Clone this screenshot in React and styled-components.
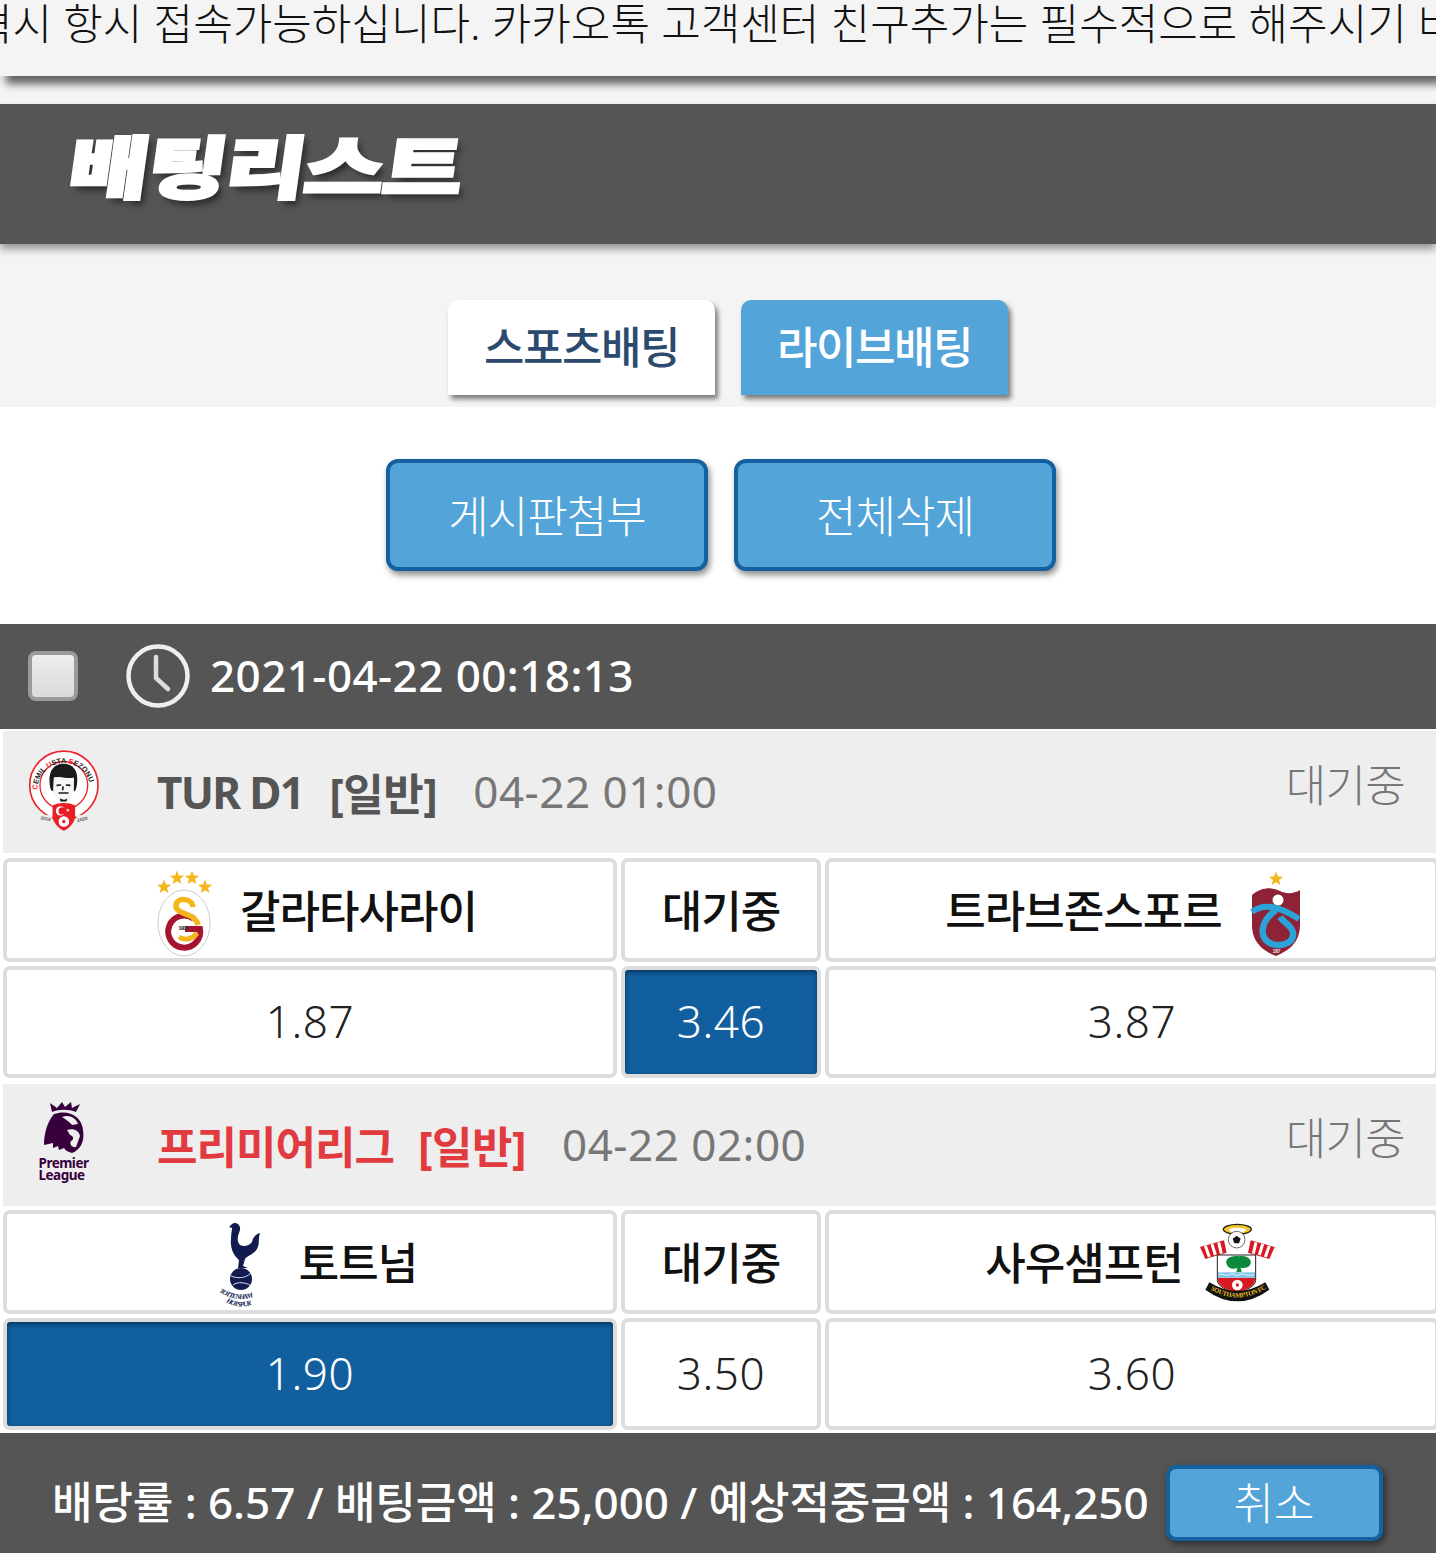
import React from 'react';
import styled, { createGlobalStyle } from 'styled-components';

const GlobalStyle = createGlobalStyle`
  html, body { margin: 0; padding: 0; background: #fff; }
  body { font-family: "Noto Sans", "Noto Sans CJK KR", sans-serif; width: 1436px; overflow-x: hidden; }
  * { box-sizing: border-box; }
`;

const Page = styled.div`
  width: 1436px;
  height: 1553px;
  overflow: hidden;
  background: #fff;
`;
const TopArea = styled.div`
  background: #f4f4f4;
  height: 407px;
  display: flex;
  flex-direction: column;
`;
const Notice = styled.div`
  height: 76px;
  font-size: 43px;
  font-weight: 300;
  line-height: 48px;
  color: #111;
  white-space: nowrap;
  overflow: hidden;
  box-shadow: 6px 8px 8px rgba(0, 0, 0, 0.6);
  position: relative;
  background: #f4f4f4;
`;
const NoticeText = styled.div`
  margin-left: -27px;
`;
const TitleBar = styled.div`
  margin-top: 28px;
  height: 140px;
  background: #555;
  box-shadow: 0 5px 8px rgba(0, 0, 0, 0.4);
  padding-left: 70px;
  display: flex;
  align-items: center;
`;
const Title = styled.h1`
  margin: 0 0 20px;
  font-family: "Noto Sans CJK KR", sans-serif;
  font-size: 68px;
  font-weight: 900;
  letter-spacing: -1px;
  line-height: 1;
  color: #fff;
  -webkit-text-stroke: 3px #fff;
  transform-origin: left center;
  transform: skewX(-8deg) scaleX(1.275);
  text-shadow: 4px 5px 7px rgba(0, 0, 0, 0.55);
`;
const Tabs = styled.div`
  margin-top: 56px;
  padding-left: 20px;
  display: flex;
  justify-content: center;
  gap: 26px;
`;
const Tab = styled.div`
  width: 267px;
  height: 95px;
  padding-bottom: 6px;
  border-radius: 10px 10px 0 0;
  display: flex;
  align-items: center;
  justify-content: center;
  font-size: 44px;
  font-weight: 500;
  letter-spacing: -1.5px;
  background: ${({ $active }) => ($active ? '#53a4d8' : '#fff')};
  color: ${({ $active }) => ($active ? '#fff' : '#2c4a6e')};
  box-shadow: 3px 4px 5px rgba(0, 0, 0, 0.5);
`;
const Actions = styled.div`
  padding: 52px 0 0 6px;
  height: 217px;
  display: flex;
  justify-content: center;
  gap: 26px;
`;
const ActionButton = styled.div`
  width: 322px;
  height: 112px;
  padding-bottom: 2px;
  border: 4px solid #1460a0;
  border-radius: 12px;
  background: #53a4d8;
  color: #fff;
  font-size: 44px;
  font-weight: 300;
  letter-spacing: -1px;
  display: flex;
  align-items: center;
  justify-content: center;
  box-shadow: 2px 4px 6px rgba(0, 0, 0, 0.45);
`;
const SlipHeader = styled.div`
  height: 105px;
  padding: 0 0 2px 28px;
  background: #555;
  display: flex;
  align-items: center;
  color: #fff;
  font-size: 44px;
  font-weight: 500;
`;
const Check = styled.div`
  width: 50px;
  height: 50px;
  border: 4px solid #9a9a9a;
  border-radius: 8px;
  background: linear-gradient(#eee, #dadada);
  margin-right: 47px;
`;
const ClockIcon = styled.svg`
  width: 66px;
  height: 66px;
  margin-right: 19px;
`;
const SlipTime = styled.div`
  margin-bottom: 2px;
  letter-spacing: 0.42px;
`;
const LeagueRow = styled.div`
  margin: ${({ $first }) => ($first ? '2px' : '6px')} 0 0 3px;
  height: 122px;
  background: #eee;
  display: flex;
  align-items: center;
  padding-left: 25px;
  font-size: 44px;
`;
const LeagueLogo = styled.div`
  width: 73px;
  height: 85px;
  margin: 0 56px 3px 0;
  display: flex;
  align-items: center;
  justify-content: center;
`;
const LeagueName = styled.div`
  font-weight: 700;
  color: ${({ $red }) => ($red ? '#e23b3f' : '#555')};
  letter-spacing: ${({ $spacing }) => $spacing}px;
  margin-right: ${({ $gap }) => $gap}px;
`;
const LeagueTag = styled.div`
  font-weight: 700;
  color: ${({ $red }) => ($red ? '#e23b3f' : '#555')};
  letter-spacing: -0.5px;
  margin-right: 36px;
`;
const KickOff = styled.div`
  color: #777;
  font-weight: 400;
  letter-spacing: 0.5px;
  margin-bottom: 2px;
`;
const Status = styled.div`
  margin-left: auto;
  margin-right: 31px;
  margin-bottom: 18px;
  color: #777;
  font-weight: 300;
  letter-spacing: -0.7px;
`;
const MatchGrid = styled.div`
  display: grid;
  grid-template-columns: 614px 200px 614px;
  column-gap: 4px;
  padding-left: 3px;
  margin-top: ${({ $top }) => $top}px;
`;
const Cell = styled.div`
  height: ${({ $tall }) => ($tall ? 112 : 104)}px;
  padding-bottom: 2px;
  border: 4px solid #ddd;
  border-radius: 7px;
  background: ${({ $picked }) => ($picked ? '#125f9f' : '#fff')};
  color: ${({ $picked }) => ($picked ? '#fff' : '#222')};
  box-shadow: ${({ $picked }) => ($picked ? 'inset 0 2px 5px rgba(0, 0, 0, 0.45)' : 'none')};
  display: flex;
  align-items: center;
  justify-content: center;
  font-size: 44px;
  font-weight: 300;
  letter-spacing: 0.6px;
`;
const TeamCell = styled(Cell)`
  font-weight: 500;
  color: #111;
  letter-spacing: -1px;
  gap: ${({ $gap }) => $gap}px;
  padding-right: ${({ $shiftRight }) => $shiftRight || 0}px;
  padding-left: ${({ $shiftLeft }) => $shiftLeft || 0}px;
`;
const TeamLogo = styled.div`
  display: flex;
  margin-top: 10px;
`;
const Footer = styled.div`
  margin-top: 3px;
  height: 120px;
  background: #555;
  display: flex;
  align-items: center;
  padding: 20px 0 0 52px;
  color: #fff;
  font-size: 44px;
  font-weight: 500;
`;
const FooterText = styled.div`
  white-space: nowrap;
  margin-bottom: 6px;
  letter-spacing: -0.05px;
`;
const CancelButton = styled.div`
  width: 217px;
  height: 76px;
  margin-left: 17px;
  padding-bottom: 4px;
  border: 4px solid #1460a0;
  border-radius: 10px;
  background: #53a4d8;
  font-weight: 300;
  display: flex;
  align-items: center;
  justify-content: center;
  box-shadow: 2px 3px 7px rgba(0, 0, 0, 0.5);
`;

const star = (cx, cy, r) => {
  const pts = [];
  for (let i = 0; i < 10; i++) {
    const a = (Math.PI / 5) * i - Math.PI / 2;
    const rad = i % 2 ? r * 0.42 : r;
    pts.push(`${(cx + rad * Math.cos(a)).toFixed(2)},${(cy + rad * Math.sin(a)).toFixed(2)}`);
  }
  return pts.join(' ');
};

const CemilLogo = () => (
  <svg width="73" height="85" viewBox="80 385 220 255">
    <defs>
      <path id="cemilArc" d="M108 510 A80 80 0 1 1 268 510" />
    </defs>
    <circle cx="188" cy="497" r="103" fill="#fff" stroke="#e8242c" strokeWidth="5" />
    <circle cx="188" cy="497" r="72" fill="#fff" stroke="#e8242c" strokeWidth="4" />
    <text fontSize="22" fontWeight="700" fontFamily="Liberation Sans, sans-serif" fill="#222">
      <textPath href="#cemilArc">
        <tspan fill="#e8242c">C</tspan>EMIL <tspan fill="#e8242c">U</tspan>STA <tspan fill="#e8242c">S</tspan>EZONU
      </textPath>
    </text>
    <path d="M145 490 C142 450 160 432 186 432 C216 432 232 452 228 490 C226 508 222 518 218 514 L218 474 C200 478 170 470 158 474 L156 514 C150 516 146 505 145 490 Z" fill="#1a1a1a" />
    <path d="M158 474 C170 470 200 478 218 474 L216 520 C212 540 198 550 186 550 C172 550 160 538 157 520 Z" fill="#f6f6f6" />
    <path d="M166 497 L180 496 M194 496 L208 497 M172 520 L202 520 M186 500 L184 512" stroke="#1a1a1a" strokeWidth="5" fill="none" />
    <path d="M176 536 C184 542 192 542 198 536 L196 546 L178 546 Z" fill="#1a1a1a" />
    <path d="M154 558 C172 548 204 548 222 558 L222 595 C216 615 200 628 188 634 C176 628 160 615 154 595 Z" fill="#ea1c24" />
    <circle cx="178" cy="574" r="14" fill="#fff" />
    <circle cx="183" cy="574" r="11" fill="#ea1c24" />
    <polygon points={star(200, 572, 6)} fill="#fff" />
    <circle cx="188" cy="606" r="16" fill="#fff" />
    <circle cx="188" cy="606" r="5" fill="#ea1c24" />
    <rect x="112" y="586" width="40" height="16" fill="#eee" />
    <rect x="226" y="586" width="40" height="16" fill="#eee" />
    <text x="118" y="602" fontSize="14" fontWeight="700" fontFamily="Liberation Sans, sans-serif" fill="#555" transform="rotate(12 132 596)">2019</text>
    <text x="228" y="604" fontSize="14" fontWeight="700" fontFamily="Liberation Sans, sans-serif" fill="#555" transform="rotate(-12 244 598)">2020</text>
  </svg>
);

const PremierLogo = () => (
  <svg width="54" height="84" viewBox="0 0 54 84">
    <path d="M14 10 L12 1 L19 6 L24 0 L27 5 L33 0 L34 6 L42 2 L38 10 C31 7 21 7 14 10 Z" fill="#37003c" />
    <path d="M16 12 C30 7 44 14 45 28 C47 40 42 48 34 51 C30 50 27 48 26 46 L21 48 L20 44 L15 46 L15 41 L6 43 C6 32 9 20 16 12 Z" fill="#37003c" />
    <path d="M24 15 C31 12 38 16 40 22 L34 23 C32 20 28 18 24 15 Z M29 28 C35 26 41 28 42 34 L38 45 C34 46 31 42 33 39 C36 38 36 34 32 33 Z" fill="#eee" />
    <text x="0.5" y="66" fontSize="13.5" fontWeight="700" letterSpacing="-0.5" fontFamily="Noto Sans, sans-serif" fill="#37003c">Premier</text>
    <text x="0.5" y="78" fontSize="13.5" fontWeight="700" letterSpacing="-0.5" fontFamily="Noto Sans, sans-serif" fill="#37003c">League</text>
  </svg>
);

const GalatasarayLogo = () => (
  <svg width="56" height="86" viewBox="0 0 56 86">
    <ellipse cx="27" cy="52" rx="26" ry="33" fill="#fff" stroke="#ccc" strokeWidth="1" />
    <polygon points={star(7, 16, 7.5)} fill="#f5b61c" />
    <polygon points={star(20, 7, 7.5)} fill="#f5b61c" />
    <polygon points={star(35, 7, 7.5)} fill="#f5b61c" />
    <polygon points={star(48, 16, 7.5)} fill="#f5b61c" />
    <path d="M37 48 A16 16 0 1 0 43 58 L28 58" fill="none" stroke="#a5152f" strokeWidth="6" />
    <path d="M36 36 C35 27 20 26 19 34 C18 40 26 42 31 44 C36 46 40 49 41 54" fill="none" stroke="#f5b61c" strokeWidth="5.5" />
    <path d="M22 66 C28 70 36 68 40 62" fill="none" stroke="#f5b61c" strokeWidth="5" />
    <text x="26" y="59" textAnchor="middle" fontSize="6" fontWeight="700" fontFamily="Liberation Sans, sans-serif" fill="#333">1905</text>
  </svg>
);

const TrabzonLogo = () => (
  <svg width="52" height="86" viewBox="0 0 52 86">
    <polygon points={star(26, 8, 7.5)} fill="#f5b61c" />
    <path d="M2 24 C12 16 22 16 30 20 C36 23 44 23 50 19 L50 54 C50 72 38 80 26 85 C14 80 2 72 2 54 Z" fill="#8e2237" />
    <circle cx="28" cy="29" r="5.5" fill="#fff" />
    <path d="M2 41 C12 33 28 34 49 48" fill="none" stroke="#2aa4d8" strokeWidth="6" />
    <path d="M26 39 C10 50 8 68 22 73 C32 76 44 72 43 62 C42 54 34 52 30 46" fill="none" stroke="#2aa4d8" strokeWidth="6.5" />
    <text x="26" y="82" textAnchor="middle" fontSize="5" fontFamily="Liberation Sans, sans-serif" fill="#eee">1967</text>
  </svg>
);

const TottenhamLogo = () => (
  <svg width="46" height="88" viewBox="0 0 46 88">
    <defs>
      <path id="spursTop" d="M1 70 Q23 84 45 70" />
      <path id="spursBottom" d="M8 80 Q23 89 39 80" />
    </defs>
    <path d="M14 6 L11 5 L14 2 C18 -1 23 3 22 8 C20 14 18 18 22 23 C26 25 31 24 34 20 C35 15 38 12 42 11 C40 16 42 22 39 27 C35 33 29 34 27 37 L25 44 L30 46 L20 46 L21 38 C15 33 12 25 13 17 C13 12 14 9 14 6 Z" fill="#111b50" />
    <circle cx="23" cy="57" r="11" fill="#111b50" />
    <path d="M13 54 C20 57 28 56 33 51 M15 63 C20 59 28 61 32 63" fill="none" stroke="#d6dbee" strokeWidth="1" />
    <text fontSize="7" fontWeight="700" fontFamily="Liberation Serif, serif" fontStyle="italic" fill="#111b50">
      <textPath href="#spursTop">TOTTENHAM</textPath>
    </text>
    <text fontSize="7" fontWeight="700" fontFamily="Liberation Serif, serif" fontStyle="italic" fill="#111b50">
      <textPath href="#spursBottom">HOTSPUR</textPath>
    </text>
  </svg>
);

const SouthamptonLogo = () => (
  <svg width="76" height="90" viewBox="25 20 228 270">
    <defs>
      <path id="saintsArc" d="M56 224 Q140 274 224 224" />
    </defs>
    <ellipse cx="140" cy="45" rx="42" ry="15" fill="#f3c526" stroke="#222" strokeWidth="4" />
    <ellipse cx="140" cy="47" rx="26" ry="7" fill="#fff" />
    <path d="M28 98 L100 78 L108 115 L44 134 Z" fill="#d71920" />
    <path d="M44 94 L56 128 M64 89 L74 122 M84 84 L92 118" stroke="#fff" strokeWidth="9" />
    <path d="M252 98 L180 78 L172 115 L236 134 Z" fill="#d71920" />
    <path d="M236 94 L224 128 M216 89 L206 122 M196 84 L188 118" stroke="#fff" strokeWidth="9" />
    <path d="M80 122 L195 122 L195 198 C195 215 165 230 138 236 C110 230 80 215 80 198 Z" fill="#fff" stroke="#222" strokeWidth="3" />
    <path d="M82 190 L193 190 L193 198 C193 215 165 229 138 235 C110 229 82 215 82 198 Z" fill="#d71920" />
    <rect x="82" y="174" width="111" height="16" fill="#7cc4e8" />
    <path d="M84 181 Q92 176 100 181 T116 181 T132 181 T148 181 T164 181 T190 181" fill="none" stroke="#fff" strokeWidth="2.5" />
    <path d="M108 150 C100 130 128 122 145 126 C167 120 188 136 178 152 C172 164 150 160 150 160 L153 173 L137 173 L140 160 C130 166 112 164 108 150 Z" fill="#0b8a3e" />
    <circle cx="140" cy="212" r="16" fill="#fff" />
    <circle cx="140" cy="212" r="5" fill="#d71920" />
    <circle cx="138" cy="76" r="25" fill="#fff" stroke="#222" strokeWidth="2" />
    <path d="M138 64 L150 73 L145 87 L131 87 L126 73 Z" fill="#111" />
    <path d="M44 226 Q140 296 236 226 L224 204 Q140 256 56 204 Z" fill="#111" />
    <text fontSize="20" fontWeight="700" fontFamily="Liberation Serif, serif" fill="#e5b92b">
      <textPath href="#saintsArc" startOffset="4">SOUTHAMPTON FC</textPath>
    </text>
  </svg>
);

const Match = ({ first, teamTop, logo, name, nameSpacing, nameGap, red, kickoff, home, away, odds, picked, homeGap, awayGap, homeShift, awayShift }) => (
  <>
    <LeagueRow $first={first}>
      <LeagueLogo>{logo}</LeagueLogo>
      <LeagueName $red={red} $spacing={nameSpacing} $gap={nameGap}>{name}</LeagueName>
      <LeagueTag $red={red}>[일반]</LeagueTag>
      <KickOff>{kickoff}</KickOff>
      <Status>대기중</Status>
    </LeagueRow>
    <MatchGrid $top={teamTop}>
      <TeamCell $gap={homeGap} $shiftLeft={homeShift}>{home}</TeamCell>
      <Cell as={TeamCell}>대기중</Cell>
      <TeamCell $gap={awayGap} $shiftRight={awayShift}>{away}</TeamCell>
    </MatchGrid>
    <MatchGrid $top={4}>
      {odds.map((o, i) => (
        <Cell key={o} $tall $picked={picked === i}>{o}</Cell>
      ))}
    </MatchGrid>
  </>
);

export default function App() {
  return (
    <Page>
      <GlobalStyle />
      <TopArea>
        <Notice>
          <NoticeText>혁시 항시 접속가능하십니다. 카카오톡 고객센터 친구추가는 필수적으로 해주시기 바랍니다.</NoticeText>
        </Notice>
        <TitleBar>
          <Title>배팅리스트</Title>
        </TitleBar>
        <Tabs>
          <Tab>스포츠배팅</Tab>
          <Tab $active>라이브배팅</Tab>
        </Tabs>
      </TopArea>
      <Actions>
        <ActionButton>게시판첨부</ActionButton>
        <ActionButton>전체삭제</ActionButton>
      </Actions>
      <SlipHeader>
        <Check />
        <ClockIcon viewBox="0 0 66 66">
          <circle cx="33" cy="33" r="29.5" fill="none" stroke="#eee" strokeWidth="4.5" />
          <path d="M31 14 L31 35 L43 46" fill="none" stroke="#ddd" strokeWidth="4.5" strokeLinecap="round" />
        </ClockIcon>
        <SlipTime>2021-04-22 00:18:13</SlipTime>
      </SlipHeader>
      <Match
        first
        teamTop={5}
        logo={<CemilLogo />}
        name="TUR D1"
        nameSpacing={-1.7}
        nameGap={26}
        kickoff="04-22 01:00"
        home={<><TeamLogo><GalatasarayLogo /></TeamLogo><span>갈라타사라이</span></>}
        homeGap={27}
        homeShift={14}
        away={<><span>트라브존스포르</span><TeamLogo><TrabzonLogo /></TeamLogo></>}
        awayGap={28}
        awayShift={17}
        odds={['1.87', '3.46', '3.87']}
        picked={1}
      />
      <Match
        teamTop={4}
        logo={<PremierLogo />}
        name="프리미어리그"
        nameSpacing={-1}
        nameGap={24}
        red
        kickoff="04-22 02:00"
        home={<><TeamLogo><TottenhamLogo /></TeamLogo><span>토트넘</span></>}
        homeGap={35}
        homeShift={15}
        away={<><span>사우샘프턴</span><TeamLogo><SouthamptonLogo /></TeamLogo></>}
        awayGap={16}
        awayShift={4}
        odds={['1.90', '3.50', '3.60']}
        picked={0}
      />
      <Footer>
        <FooterText>배당률 : 6.57 / 배팅금액 : 25,000 / 예상적중금액 : 164,250</FooterText>
        <CancelButton>취소</CancelButton>
      </Footer>
    </Page>
  );
}
